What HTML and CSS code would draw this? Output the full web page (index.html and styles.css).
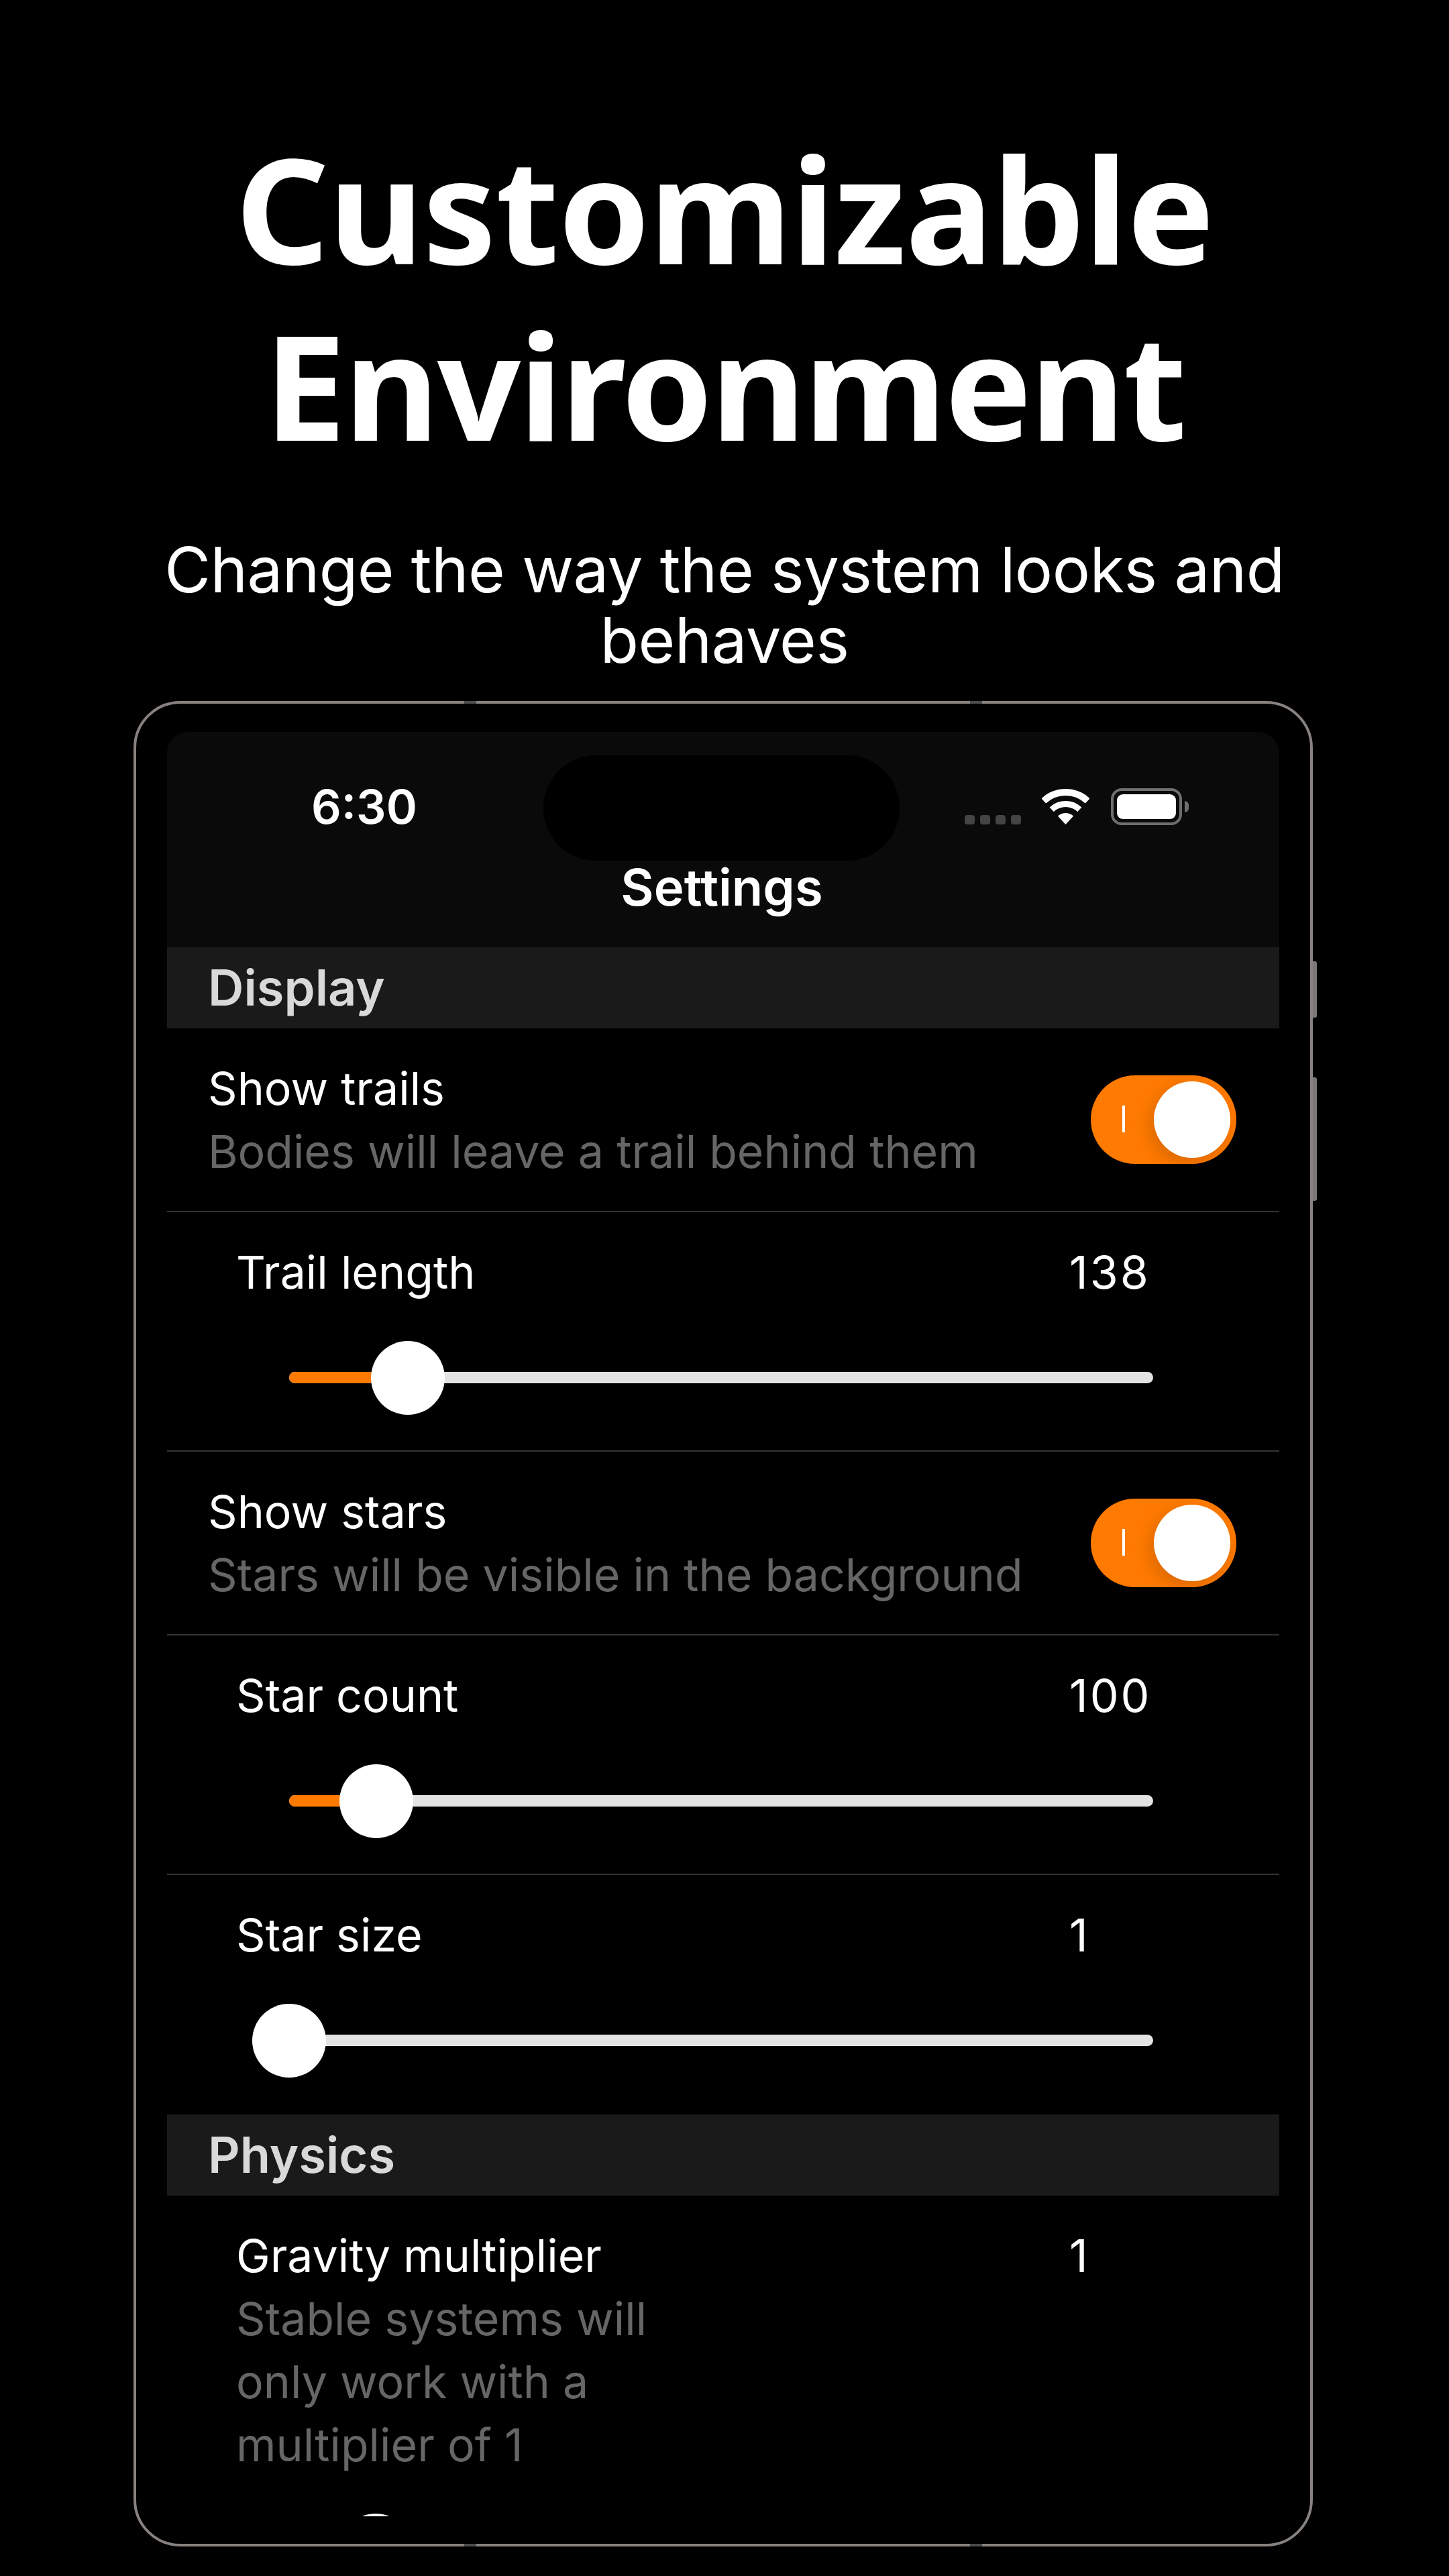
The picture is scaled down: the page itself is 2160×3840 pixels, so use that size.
FILE: index.html
```html
<!DOCTYPE html>
<html lang="en">
<head>
    <meta charset="UTF-8">
    <meta name="viewport" content="width=device-width, initial-scale=1.0">
    <title>Customizable Environment</title>
    <link rel="stylesheet" href="styles.css">
</head>
<body>
    <div class="page">
        <h1 class="headline">Customizable<br><span class="headline-tight">Environment</span></h1>
        <p class="tagline">Change the way the system looks and<br>behaves</p>

        <div class="device">
            <!-- frame details -->
            <span class="tick tick-top tick-a"></span>
            <span class="tick tick-top tick-b"></span>
            <span class="tick tick-bottom tick-a"></span>
            <span class="tick tick-bottom tick-b"></span>
            <span class="side-btn side-btn-short"></span>
            <span class="side-btn side-btn-long"></span>

            <div class="screen">
                <div class="island"></div>

                <header class="app-header">
                    <div class="status-bar">
                        <span class="clock">6:30</span>
                        <div class="status-icons">
                            <div class="signal">
                                <span></span><span></span><span></span><span></span>
                            </div>
                            <svg class="wifi" width="71" height="53" viewBox="0 0 71 53">
                                <path d="M2.8 17.9A48 48 0 0 1 68.2 17.9" fill="none" stroke="#fff" stroke-width="10"/>
                                <path d="M14.7 30.7A30.5 30.5 0 0 1 56.3 30.7" fill="none" stroke="#fff" stroke-width="9"/>
                                <path d="M35.5 53L23.9 40.6A17 17 0 0 1 47.1 40.6Z" fill="#fff"/>
                            </svg>
                            <div class="battery"><div class="battery-level"></div></div>
                            <span class="battery-cap"></span>
                        </div>
                    </div>
                    <div class="nav-title">Settings</div>
                </header>

                <div class="section-title">Display</div>

                <div class="row toggle-row">
                    <div>
                        <div class="label">Show trails</div>
                        <div class="hint">Bodies will leave a trail behind them</div>
                    </div>
                    <div class="switch"><span class="switch-mark"></span><span class="switch-thumb"></span></div>
                </div>

                <div class="row slider-row">
                    <div class="slider-head">
                        <div class="label">Trail length</div>
                        <div class="label value">138</div>
                    </div>
                    <div class="slider">
                        <div class="track">
                            <div class="fill" style="width: 13.74%"></div>
                            <div class="thumb" style="left: 13.74%"></div>
                        </div>
                    </div>
                </div>

                <div class="row toggle-row">
                    <div>
                        <div class="label">Show stars</div>
                        <div class="hint">Stars will be visible in the background</div>
                    </div>
                    <div class="switch"><span class="switch-mark"></span><span class="switch-thumb"></span></div>
                </div>

                <div class="row slider-row">
                    <div class="slider-head">
                        <div class="label">Star count</div>
                        <div class="label value">100</div>
                    </div>
                    <div class="slider">
                        <div class="track">
                            <div class="fill" style="width: 10.09%"></div>
                            <div class="thumb" style="left: 10.09%"></div>
                        </div>
                    </div>
                </div>

                <div class="row slider-row no-line">
                    <div class="slider-head">
                        <div class="label">Star size</div>
                        <div class="label value">1</div>
                    </div>
                    <div class="slider">
                        <div class="track">
                            <div class="thumb" style="left: 0%"></div>
                        </div>
                    </div>
                </div>

                <div class="section-title">Physics</div>

                <div class="row slider-row">
                    <div class="slider-head">
                        <div class="head-text">
                            <div class="label">Gravity multiplier</div>
                            <div class="hint">Stable systems will only work with a multiplier of 1</div>
                        </div>
                        <div class="label value">1</div>
                    </div>
                    <div class="slider">
                        <div class="track">
                            <div class="fill" style="width: 10%"></div>
                            <div class="thumb" style="left: 10%"></div>
                        </div>
                    </div>
                </div>
            </div>
        </div>
    </div>
</body>
</html>
```

FILE: styles.css
```css
* {
    box-sizing: border-box;
}

body {
    margin: 0;
    background-color: #000;
    color: #fff;
    font-family: Inter, "Liberation Sans", sans-serif;
}

.page {
    width: 2160px;
    height: 3840px;
    overflow: hidden;
    padding-top: 178px;
    display: flex;
    flex-direction: column;
    align-items: center;
}

.headline {
    margin: 0;
    font-family: "Noto Sans", sans-serif;
    font-size: 218px;
    font-weight: 700;
    line-height: 263px;
    letter-spacing: -1px;
    text-align: center;
}

.headline-tight {
    letter-spacing: -2.8px;
}

.tagline {
    margin: 93px 0 0;
    font-size: 94px;
    font-weight: 400;
    line-height: 105px;
    letter-spacing: -0.55px;
    text-align: center;
}

/* phone frame */
.device {
    position: relative;
    width: 1758px;
    height: 2751px;
    margin: 38px 4px 0 0;
    padding: 42px 46px;
    border: 4px solid #87827f;
    border-radius: 70px;
}

.tick {
    position: absolute;
    width: 18px;
    height: 4px;
    background-color: #4b4b4b;
}

.tick-top { top: -4px; }
.tick-bottom { bottom: -4px; }
.tick-a { left: 489px; }
.tick-b { left: 1243px; }

.side-btn {
    position: absolute;
    right: -10px;
    width: 6px;
    background-color: #7c7877;
    border-radius: 0 3px 3px 0;
}

.side-btn-short {
    top: 384px;
    height: 84px;
}

.side-btn-long {
    top: 557px;
    height: 184px;
}

.screen {
    position: relative;
    height: 2660px;
    overflow: hidden;
    background-color: #000;
    border-radius: 32px 32px 0 0;
}

.island {
    position: absolute;
    top: 35px;
    left: 561px;
    width: 531px;
    height: 157px;
    background-color: #000;
    border-radius: 78px;
}

.app-header {
    height: 321px;
    background-color: #0a0a0a;
}

.status-bar {
    display: flex;
    justify-content: space-between;
    align-items: center;
    height: 55px;
    padding: 0 135px 0 215px;
    position: relative;
    top: 84px;
}

.clock {
    font-size: 70px;
    font-weight: 600;
    line-height: 55px;
}

.status-icons {
    display: flex;
    align-items: center;
}

.signal {
    display: flex;
    gap: 8px;
    align-self: flex-end;
    margin: 0 31px 1px 0;
}

.signal span {
    width: 15px;
    height: 14px;
    background-color: #444;
    border-radius: 4px;
}

.wifi {
    margin-right: 32px;
}

.battery {
    width: 106px;
    height: 55px;
    padding: 5px 5px;
    border: 4px solid #6f6f6f;
    border-radius: 16px;
}

.battery-level {
    height: 100%;
    background-color: #fff;
    border-radius: 9px;
}

.battery-cap {
    width: 6px;
    height: 17px;
    margin-left: 4px;
    background-color: #6f6f6f;
    border-radius: 0 8px 8px 0;
}

.nav-title {
    padding: 131px 4px 0 0;
    font-size: 76px;
    font-weight: 600;
    line-height: 90px;
    text-align: center;
}

.section-title {
    height: 121px;
    padding-left: 61px;
    background-color: #1a1a1a;
    color: #d9d9d9;
    font-size: 74px;
    font-weight: 600;
    line-height: 121px;
}

.row {
    border-bottom: 2px solid #333;
}

.no-line {
    border-bottom: none;
}

.label {
    font-size: 68px;
    line-height: 94px;
}

.hint {
    color: #666;
    font-size: 68px;
    line-height: 94px;
}

/* toggle rows */
.toggle-row {
    display: flex;
    justify-content: space-between;
    align-items: center;
    height: 274px;
    padding: 0 64px 0 61px;
}

.switch {
    position: relative;
    width: 217px;
    height: 132px;
    background-color: #ff7a00;
    border-radius: 66px;
}

.switch-mark {
    position: absolute;
    top: 45px;
    left: 47px;
    width: 4px;
    height: 40px;
    background-color: #fff;
}

.switch-thumb {
    position: absolute;
    top: 9px;
    right: 9px;
    width: 114px;
    height: 114px;
    background-color: #fff;
    border-radius: 50%;
    box-shadow: -6px 8px 24px rgba(0, 0, 0, 0.15);
}

/* slider rows */
.slider-row {
    padding: 42px 0 54px 103px;
}

.slider-row.no-line {
    padding-bottom: 56px;
}

.slider-head {
    display: flex;
    justify-content: space-between;
    padding-right: 113px;
}

.head-text {
    width: 640px;
}

.value {
    width: 200px;
    letter-spacing: 3px;
}

.slider {
    display: flex;
    align-items: center;
    height: 110px;
    margin: 55px 188px 0 79px;
}

.track {
    position: relative;
    width: 100%;
    height: 17px;
    background-color: #e3e3e3;
    border-radius: 9px;
}

.fill {
    height: 100%;
    background-color: #ff7a00;
    border-radius: 9px 0 0 9px;
}

.thumb {
    position: absolute;
    top: -46px;
    width: 110px;
    height: 110px;
    margin-left: -55px;
    background-color: #fff;
    border-radius: 50%;
}
```
